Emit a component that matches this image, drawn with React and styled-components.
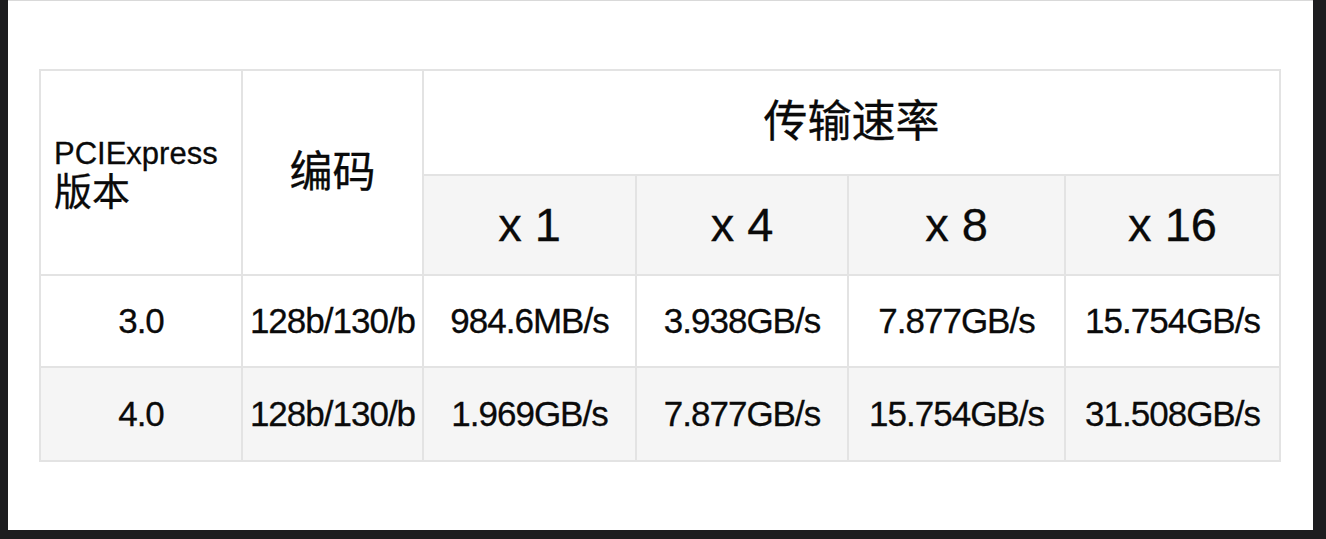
import React from 'react';
import styled, { createGlobalStyle } from 'styled-components';

const GlobalStyle = createGlobalStyle`
  html, body {
    margin: 0;
    padding: 0;
    background: #1d1d1f;
  }
  body {
    font-family: "Liberation Sans", "Noto Sans CJK SC", sans-serif;
    color: #0a0a0a;
  }
`;

const Card = styled.div`
  box-sizing: border-box;
  margin-left: 8px;
  width: 1305px;
  height: 530px;
  background: #fff;
  border-top: 1px solid #d9d9d9;
  padding: 68px 0 0 31px;
`;

const Table = styled.table`
  border-collapse: collapse;
  table-layout: fixed;
  width: 1240px;
`;

const Row = styled.tr`
  height: ${props => props.h}px;
  background: ${props => (props.shaded ? '#f5f5f5' : '#fff')};
`;

const Cell = styled.td`
  border: 2px solid #e3e3e3;
  padding: 0;
  text-align: center;
  vertical-align: middle;
  font-size: ${props => props.size || 35}px;
  letter-spacing: ${props => (props.size ? 0 : -1)}px;
  line-height: 1.15;
  white-space: nowrap;
  -webkit-text-stroke: 0.3px #0a0a0a;
`;

const VersionHead = styled(Cell)`
  text-align: left;
  padding-left: 13px;
  padding-top: 2px;
`;

const Latin = styled.div`
  font-size: 31px;
  line-height: 36px;
`;

const Han = styled.div`
  font-size: 38px;
  line-height: 40px;
`;

const widths = [202, 181, 213, 212, 217, 215];
const lanes = ['x 1', 'x 4', 'x 8', 'x 16'];
const rows = [
  { ver: '3.0', enc: '128b/130/b', rates: ['984.6MB/s', '3.938GB/s', '7.877GB/s', '15.754GB/s'] },
  { ver: '4.0', enc: '128b/130/b', rates: ['1.969GB/s', '7.877GB/s', '15.754GB/s', '31.508GB/s'] },
];

export default function App() {
  return (
    <>
      <GlobalStyle />
      <Card>
        <Table>
          <colgroup>
            {widths.map((w, i) => (
              <col key={i} style={{ width: w }} />
            ))}
          </colgroup>
          <tbody>
            <Row h={105}>
              <VersionHead rowSpan={2} size={31}>
                <Latin>PCIExpress</Latin>
                <Han>版本</Han>
              </VersionHead>
              <Cell rowSpan={2} size={43}>编码</Cell>
              <Cell colSpan={4} size={44}>传输速率</Cell>
            </Row>
            <Row h={100} shaded>
              {lanes.map(l => (
                <Cell key={l} size={47}>{l}</Cell>
              ))}
            </Row>
            {rows.map((r, i) => (
              <Row key={r.ver} h={i === 0 ? 92 : 94} shaded={i === 1}>
                <Cell>{r.ver}</Cell>
                <Cell>{r.enc}</Cell>
                {r.rates.map((v, j) => (
                  <Cell key={j}>{v}</Cell>
                ))}
              </Row>
            ))}
          </tbody>
        </Table>
      </Card>
    </>
  );
}
